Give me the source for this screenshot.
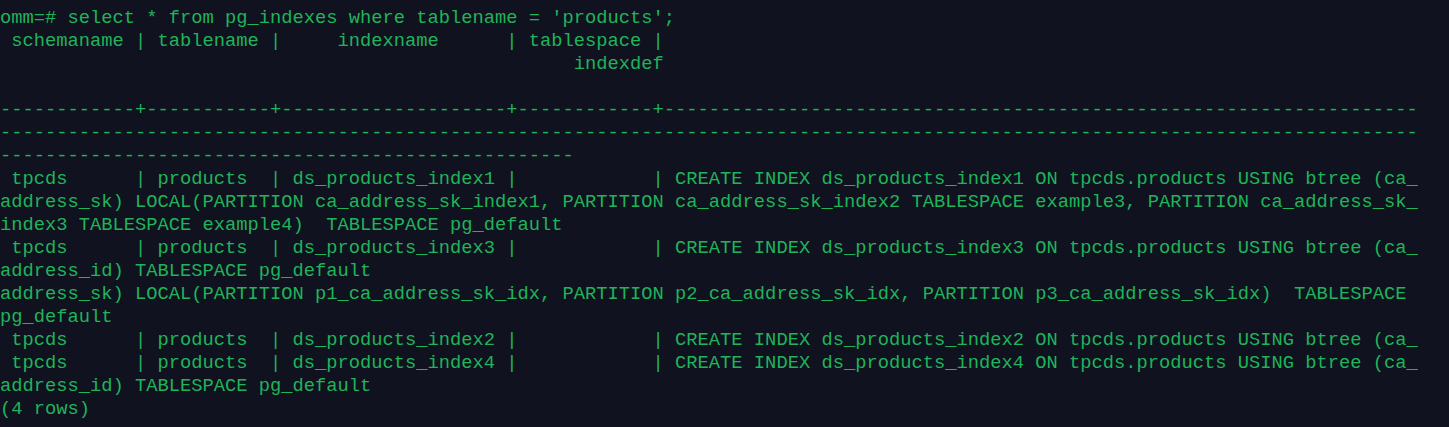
const lines = [
  "omm=# select * from pg_indexes where tablename = 'products';",
  " schemaname | tablename |     indexname      | tablespace |",
  "                                                   indexdef",
  "",
  "------------+-----------+--------------------+------------+" + "-".repeat(67),
  "-".repeat(126),
  "-".repeat(51),
  " tpcds      | products  | ds_products_index1 |            | CREATE INDEX ds_products_index1 ON tpcds.products USING btree (ca_",
  "address_sk) LOCAL(PARTITION ca_address_sk_index1, PARTITION ca_address_sk_index2 TABLESPACE example3, PARTITION ca_address_sk_",
  "index3 TABLESPACE example4)  TABLESPACE pg_default",
  " tpcds      | products  | ds_products_index3 |            | CREATE INDEX ds_products_index3 ON tpcds.products USING btree (ca_",
  "address_id) TABLESPACE pg_default",
  "address_sk) LOCAL(PARTITION p1_ca_address_sk_idx, PARTITION p2_ca_address_sk_idx, PARTITION p3_ca_address_sk_idx)  TABLESPACE",
  "pg_default",
  " tpcds      | products  | ds_products_index2 |            | CREATE INDEX ds_products_index2 ON tpcds.products USING btree (ca_",
  " tpcds      | products  | ds_products_index4 |            | CREATE INDEX ds_products_index4 ON tpcds.products USING btree (ca_",
  "address_id) TABLESPACE pg_default",
  "(4 rows)",
];

export default function App() {
  return (
    <div className="w-[1449px] h-[427px] overflow-hidden bg-[#10121f] pt-[7px] text-[#1fb45a] font-['Liberation_Mono',monospace] text-[18.75px] leading-[23px]">
      {lines.map((l, i) => (
        <div key={i} className="whitespace-pre h-[23px]">
          {l}
        </div>
      ))}
    </div>
  );
}
